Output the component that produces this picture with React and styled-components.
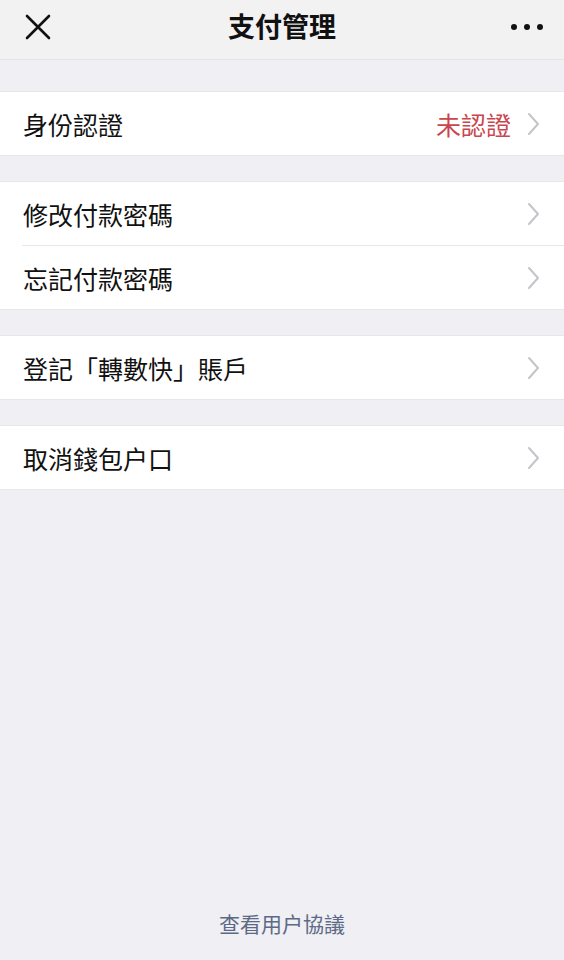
import styled, { createGlobalStyle } from "styled-components";

const GlobalStyle = createGlobalStyle`
  html, body {
    margin: 0;
    padding: 0;
    background: #efeff4;
    font-family: "Noto Sans CJK TC", "Noto Sans", sans-serif;
  }
`;

const Page = styled.div`
  min-height: 960px;
  display: flex;
  flex-direction: column;
  background: #efeff4;
`;

const Header = styled.header`
  height: 60px;
  display: flex;
  align-items: center;
  justify-content: space-between;
  padding: 0 20px 0 24px;
  background: #f2f2f3;
  border-bottom: 1px solid #e3e3e8;
  box-sizing: border-box;
  position: relative;
`;

const Title = styled.h1`
  position: absolute;
  left: 0;
  right: 0;
  margin: 0;
  text-align: center;
  font-size: 27px;
  font-weight: 700;
  color: #111;
  pointer-events: none;
  line-height: 60px;
  top: -4px;
`;

const IconButton = styled.button`
  border: none;
  background: none;
  padding: 0;
  display: flex;
  align-items: center;
  margin-top: -6px;
`;

const Groups = styled.div`
  display: flex;
  flex-direction: column;
  gap: 25px;
  padding-top: 31px;
`;

const Group = styled.div`
  background: #fff;
  border-top: 1px solid #e6e6eb;
  border-bottom: 1px solid #e6e6eb;
`;

const Row = styled.div`
  height: 63px;
  display: flex;
  align-items: center;
  padding: 0 24px 0 23px;
  position: relative;

  & + &::before {
    content: "";
    position: absolute;
    top: -1px;
    left: 22px;
    right: 0;
    height: 1px;
    background: #e6e6eb;
  }
  & + & {
    margin-top: 1px;
  }
`;

const Label = styled.span`
  flex: 1;
  font-size: 25px;
  color: #111;
`;

const Status = styled.span`
  font-size: 25px;
  color: #c9464e;
  margin-right: 16px;
`;

const Footer = styled.div`
  margin-top: auto;
  padding-bottom: 22px;
  text-align: center;
  font-size: 21px;
  color: #5d6a86;
`;

function Chevron() {
  return (
    <svg width="13" height="24" viewBox="0 0 13 24" fill="none">
      <path d="M2 2l9 10-9 10" stroke="#c4c4c9" strokeWidth="2" strokeLinecap="round" strokeLinejoin="round" />
    </svg>
  );
}

function Item({ label, status }) {
  return (
    <Row>
      <Label>{label}</Label>
      {status && <Status>{status}</Status>}
      <Chevron />
    </Row>
  );
}

export default function App() {
  return (
    <Page>
      <GlobalStyle />
      <Header>
        <IconButton aria-label="close">
          <svg width="28" height="28" viewBox="0 0 28 28">
            <path d="M3 3l22 22M25 3L3 25" stroke="#111" strokeWidth="2.6" strokeLinecap="round" />
          </svg>
        </IconButton>
        <Title>支付管理</Title>
        <IconButton aria-label="more">
          <svg width="34" height="8" viewBox="0 0 34 8">
            <circle cx="4" cy="4" r="3" fill="#111" />
            <circle cx="17" cy="4" r="3" fill="#111" />
            <circle cx="30" cy="4" r="3" fill="#111" />
          </svg>
        </IconButton>
      </Header>
      <Groups>
        <Group>
          <Item label="身份認證" status="未認證" />
        </Group>
        <Group>
          <Item label="修改付款密碼" />
          <Item label="忘記付款密碼" />
        </Group>
        <Group>
          <Item label="登記「轉數快」賬戶" />
        </Group>
        <Group>
          <Item label="取消錢包户口" />
        </Group>
      </Groups>
      <Footer>查看用户協議</Footer>
    </Page>
  );
}
